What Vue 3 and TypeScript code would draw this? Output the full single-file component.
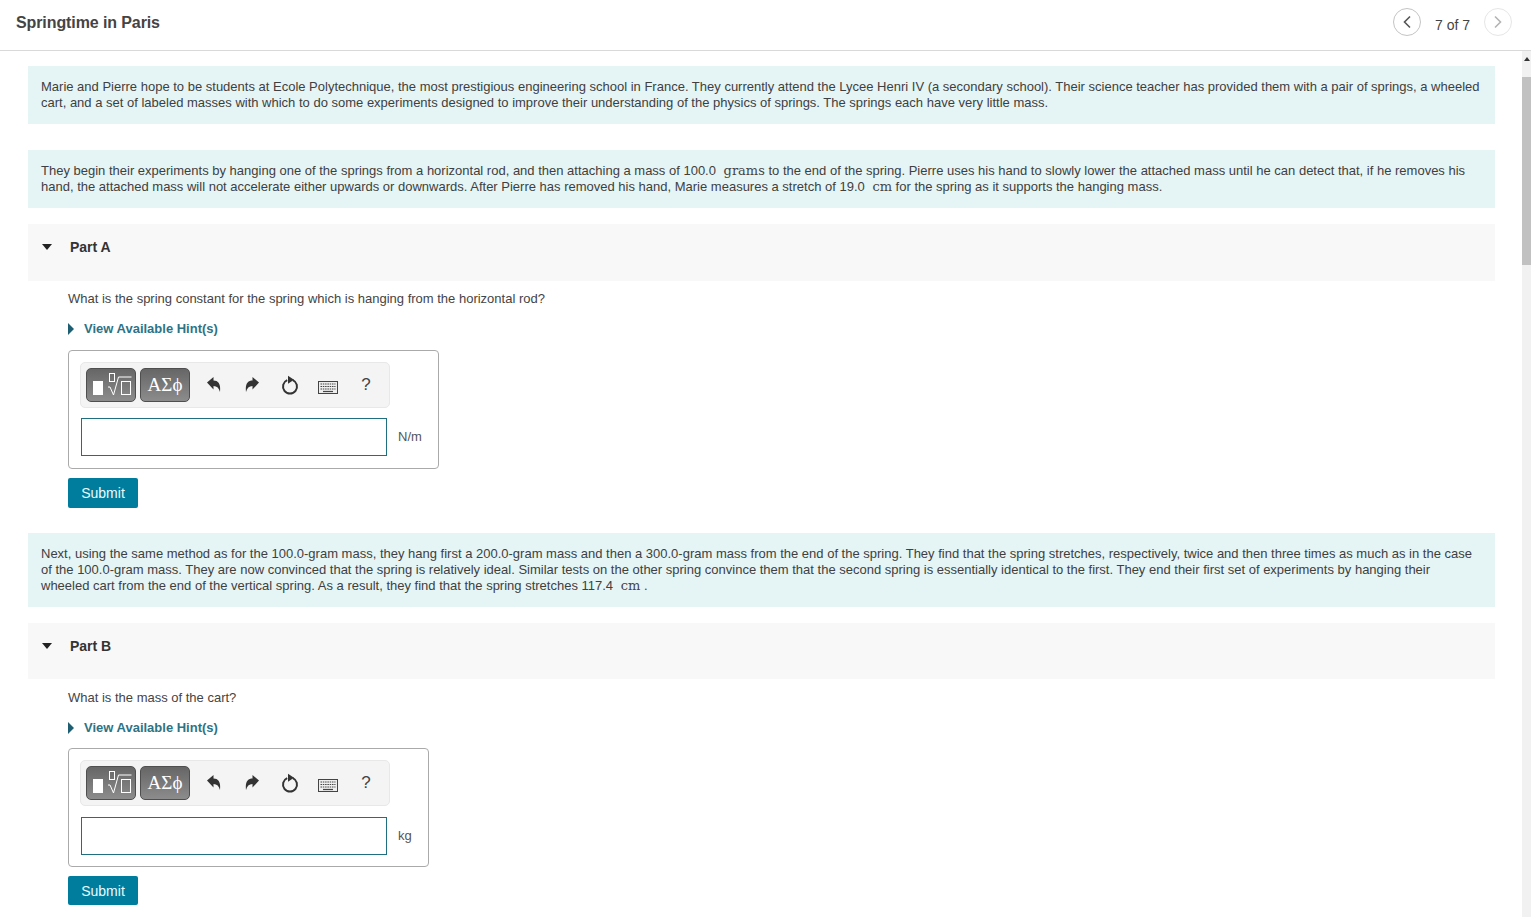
<script setup lang="ts">
const parts: { label: string; question: string; unit: string }[] = [
  { label: 'Part A', question: 'What is the spring constant for the spring which is hanging from the horizontal rod?', unit: 'N/m' },
  { label: 'Part B', question: 'What is the mass of the cart?', unit: 'kg' },
]
</script>

<template>
  <div class="page">
    <header class="top">
      <h1>Springtime in Paris</h1>
      <nav class="pager">
        <button class="round">
          <svg width="10" height="14" viewBox="0 0 10 14"><path d="M8 1.500 2.500 7 8 12.500" fill="none" stroke="#555" stroke-width="1.600" /></svg>
        </button>
        <span class="count">7 of 7</span>
        <button class="round off">
          <svg width="10" height="14" viewBox="0 0 10 14"><path d="M2 1.500 7.500 7 2 12.500" fill="none" stroke="#b4b4b4" stroke-width="1.600" /></svg>
        </button>
      </nav>
    </header>

    <div class="body">
      <main class="content">
        <p class="intro">Marie and Pierre hope to be students at Ecole Polytechnique, the most prestigious engineering school in France. They currently attend the Lycee Henri IV (a secondary school). Their science teacher has provided them with a pair of springs, a wheeled cart, and a set of labeled masses with which to do some experiments designed to improve their understanding of the physics of springs. The springs each have very little mass.</p>

        <p class="intro second">They begin their experiments by hanging one of the springs from a horizontal rod, and then attaching a mass of 100.0 <span class="math">grams</span> to the end of the spring. Pierre uses his hand to slowly lower the attached mass until he can detect that, if he removes his hand, the attached mass will not accelerate either upwards or downwards. After Pierre has removed his hand, Marie measures a stretch of 19.0 <span class="math">cm</span> for the spring as it supports the hanging mass.</p>

        <template v-for="(part, i) in parts" :key="part.label">
          <p v-if="i === 1" class="intro third">Next, using the same method as for the 100.0-gram mass, they hang first a 200.0-gram mass and then a 300.0-gram mass from the end of the spring. They find that the spring stretches, respectively, twice and then three times as much as in the case of the 100.0-gram mass. They are now convinced that the spring is relatively ideal. Similar tests on the other spring convince them that the second spring is essentially identical to the first. They end their first set of experiments by hanging their wheeled cart from the end of the vertical spring. As a result, they find that the spring stretches 117.4 <span class="math">cm</span> .</p>

          <section class="part" :class="{ 'part-b': i === 1 }">
            <div class="part-head">
              <i class="caret-down"></i>
              <strong>{{ part.label }}</strong>
            </div>
            <div class="part-body">
              <p class="question">{{ part.question }}</p>
              <a class="hint"><i class="caret-right"></i>View Available Hint(s)</a>
              <div class="answer">
                <div class="toolbar">
                  <button class="tool">
                    <svg width="50" height="34" viewBox="0 0 50 34">
                      <rect x="7" y="13" width="10" height="14" fill="#fff" />
                      <rect x="23.500" y="5.500" width="5" height="8" fill="none" stroke="#fff" />
                      <path d="M22 19h2l3.500 8 5-18h13" fill="none" stroke="#fff" />
                      <rect x="35.500" y="13.500" width="9" height="13" fill="none" stroke="#fff" />
                    </svg>
                  </button>
                  <button class="tool greek">ΑΣϕ</button>
                  <div class="actions">
                    <span class="slot">
                      <svg width="16" height="18" viewBox="0 0 16 18"><path d="M1 6.500 7.500 1v3.500c4.500 0 7.500 3 6.500 11.500C13 12 11 10 7.500 10v3.500z" fill="#333" /></svg>
                    </span>
                    <span class="slot">
                      <svg width="16" height="18" viewBox="0 0 16 18"><path d="M15 6.500 8.500 1v3.500C4 4.500 1 7.500 2 16c1-4 3-6 6.500-6v3.500z" fill="#333" /></svg>
                    </span>
                    <span class="slot">
                      <svg width="18" height="20" viewBox="0 0 18 20"><path d="M11.800 5.100a7 7 0 1 1-5.600 0" fill="none" stroke="#333" stroke-width="2" /><path d="M7 .8 13 4.800 7 8.800z" fill="#333" /></svg>
                    </span>
                    <span class="slot low">
                      <svg width="20" height="13" viewBox="0 0 20 13">
                        <rect x=".5" y=".5" width="19" height="12" fill="#eee" stroke="#444" />
                        <path d="M2.500 3h15M2.500 5.500h15M2.500 8h15" stroke="#444" stroke-width="1.200" stroke-dasharray="1.500 .8" />
                        <path d="M5 10.500h10" stroke="#444" stroke-width="1.200" />
                      </svg>
                    </span>
                    <span class="slot help">?</span>
                  </div>
                </div>
                <div class="entry">
                  <input class="field" type="text" />
                  <span class="unit">{{ part.unit }}</span>
                </div>
              </div>
              <button class="submit">Submit</button>
            </div>
          </section>
        </template>
      </main>
      <aside class="scrollbar">
        <i class="arrow"></i>
        <div class="thumb"></div>
      </aside>
    </div>
  </div>
</template>

<style>
html, body { margin: 0; height: 100%; overflow: hidden; background: #fff; }
</style>

<style scoped>
.page { height: 917px; overflow: hidden; display: flex; flex-direction: column; font: 13px/16px "Liberation Sans", Arial, sans-serif; color: #444; }
.top { height: 50px; flex: none; border-bottom: 1px solid #d9d9d9; display: flex; align-items: center; justify-content: space-between; padding: 0 19px 0 16px; }
.top h1 { margin: 0 0 5px; font-size: 16px; font-weight: bold; letter-spacing: -.1px; color: #444; }
.pager { display: flex; align-items: center; margin-bottom: 6px; }
.round { width: 28px; height: 28px; padding: 0; border-radius: 50%; border: 1px solid #c4c4c4; background: #fff; display: flex; align-items: center; justify-content: center; }
.round.off { border-color: #e6e6e6; }
.count { margin: 5px 14px 0; font-size: 14px; color: #444; }
.body { flex: 1; display: flex; min-height: 0; }
.content { flex: 1; padding: 15px 27px 0 28px; min-width: 0; }
.intro { margin: 0; padding: 13px; background: #e5f5f6; color: #404040; }
.second { margin-top: 26px; }
.third { margin-top: 25px; }
.math { font-family: "DejaVu Serif", "Liberation Serif", serif; font-size: 13px; margin-left: 4px; color: #444; }
.part { margin-top: 16px; }
.part-head { height: 57px; background: #f8f8f8; display: flex; align-items: flex-start; padding: 15px 0 0 14px; box-sizing: border-box; }
.part-b .part-head { height: 56px; }
.part-head strong { font-size: 14px; margin-left: 18px; color: #333; }
.caret-down { width: 0; height: 0; border: 5.500px solid transparent; border-top: 6px solid #222; border-bottom: 0; margin-top: 5px; }
.part-body { padding-left: 40px; }
.question { margin: 10px 0 0; color: #444; }
.part-b .question { margin-top: 11px; }
.hint { display: flex; align-items: center; margin-top: 14px; font-weight: bold; color: #2d7386; }
.caret-right { width: 0; height: 0; border: 6px solid transparent; border-left: 6px solid #1e5e73; border-right: 0; margin-right: 10px; }
.answer { width: max-content; margin-top: 13px; border: 1px solid #aaa; border-radius: 4px; padding: 11px 11px 12px; }
.part-b .answer { margin-top: 12px; padding-bottom: 11px; }
.toolbar { box-sizing: border-box; width: 310px; height: 46px; background: #f4f4f4; border: 1px solid #e8e8e8; border-radius: 5px; padding: 5px; display: flex; align-items: center; gap: 4px; }
.tool { width: 50px; height: 34px; flex: none; box-sizing: border-box; padding: 0; border: 1px solid #4f4f4f; border-radius: 5px; background: linear-gradient(#666, #8c8c8c); color: #fff; display: flex; align-items: center; justify-content: center; }
.tool svg { flex: none; margin: -1px; }
.greek { font: 19px "Liberation Serif", serif; }
.actions { display: flex; flex: none; align-items: center; margin-left: 1px; }
.slot { width: 38px; flex: none; display: flex; justify-content: center; }
.low { padding-top: 4px; }
.help { font-size: 17px; color: #444; }
.entry { display: flex; align-items: center; margin-top: 10px; }
.part-b .entry { margin-top: 11px; }
.field { width: 306px; height: 38px; box-sizing: border-box; margin-left: 1px; border: 1px solid #1f6f80; outline: 0; background: #fff; }
.unit { margin-left: 11px; padding-right: 5px; color: #555; }
.submit { display: block; margin-top: 9px; width: 70px; height: 30px; padding: 0; border: 0; border-radius: 2px; background: #007c9c; color: #e8fbff; font: 14px "Liberation Sans", Arial, sans-serif; }
.part-b .submit { height: 29px; }
.scrollbar { width: 9px; flex: none; background: #f1f1f1; display: flex; flex-direction: column; align-items: center; }
.arrow { width: 0; height: 0; border: 3px solid transparent; border-bottom: 4px solid #333; border-top: 0; margin: 6px 0 16px; }
.thumb { width: 100%; height: 188px; background: #c1c1c1; }
</style>
